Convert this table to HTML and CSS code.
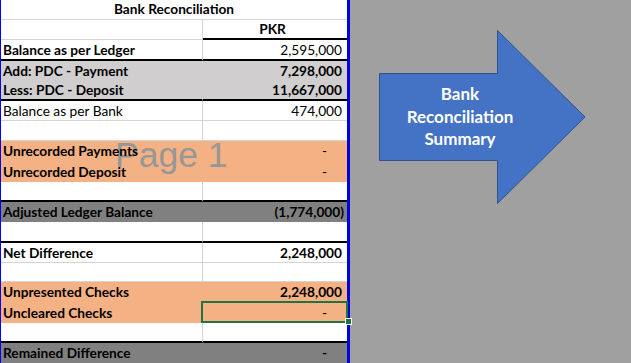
FILE: index.html
```html
<!DOCTYPE html>
<html>
<head>
<meta charset="utf-8">
<link rel="stylesheet" href="styles.css">
</head>
<body>
<div class="page">
  <div class="sheet">
    <div class="watermark">Page 1</div>
    <div class="row h20 title"><div class="c span"><span class="t">Bank Reconciliation</span></div></div>
    <div class="row h20"><div class="c l"></div><div class="c v hdr"><span class="t b ctr">PKR</span></div></div>
    <div class="row h21 thick"><div class="c l"><span class="t b">Balance as per Ledger</span></div><div class="c v"><span class="t">2,595,000</span></div></div>
    <div class="row h20 gray"><div class="c l"><span class="t b">Add: PDC - Payment</span></div><div class="c v"><span class="t b">7,298,000</span></div></div>
    <div class="row h20 gray thick"><div class="c l"><span class="t b">Less: PDC - Deposit</span></div><div class="c v"><span class="t b">11,667,000</span></div></div>
    <div class="row h20"><div class="c l"><span class="t">Balance as per Bank</span></div><div class="c v"><span class="t">474,000</span></div></div>
    <div class="row h20"><div class="c l"></div><div class="c v"></div></div>
    <div class="row h20 orange"><div class="c l"><span class="t b">Unrecorded Payments</span></div><div class="c v"><span class="t dash">-</span></div></div>
    <div class="row h21 orange"><div class="c l"><span class="t b">Unrecorded Deposit</span></div><div class="c v"><span class="t dash">-</span></div></div>
    <div class="row h20 thick"><div class="c l"></div><div class="c v"></div></div>
    <div class="row h20 dark"><div class="c l"><span class="t b">Adjusted Ledger Balance</span></div><div class="c v"><span class="t b neg">(1,774,000)</span></div></div>
    <div class="row h21 thick"><div class="c l"></div><div class="c v"></div></div>
    <div class="row h20"><div class="c l"><span class="t b">Net Difference</span></div><div class="c v"><span class="t b">2,248,000</span></div></div>
    <div class="row h19"><div class="c l"></div><div class="c v"></div></div>
    <div class="row h20 orange"><div class="c l"><span class="t b">Unpresented Checks</span></div><div class="c v"><span class="t b">2,248,000</span></div></div>
    <div class="row h21 orange"><div class="c l"><span class="t b">Uncleared Checks</span></div><div class="c v sel"><span class="t dash">-</span><span class="selbox"></span><span class="handle"></span></div></div>
    <div class="row h20 thick"><div class="c l"></div><div class="c v"></div></div>
    <div class="row h20 dark"><div class="c l"><span class="t b">Remained Difference</span></div><div class="c v"><span class="t b dash">-</span></div></div>
  </div>
  <div class="canvas">
    <svg class="arrow" width="212" height="178" viewBox="0 0 212 178">
      <polygon points="1.5,44.5 119.5,44.5 119.5,1.5 207,88 119.5,174.5 119.5,131.5 1.5,131.5" fill="#4472c4" stroke="#2f528f" stroke-width="1"/>
      <text class="atext" x="82" y="71">Bank</text>
      <text class="atext" x="82" y="93.5">Reconciliation</text>
      <text class="atext" x="82" y="115.5">Summary</text>
    </svg>
  </div>
</div>
</body>
</html>
```

FILE: styles.css
```css
* { box-sizing: border-box; }
html, body { margin: 0; padding: 0; }
body {
  background: #a0a0a0;
  font-family: Lato, "Open Sans", sans-serif;
  color: #000;
  width: 631px;
  height: 363px;
  overflow: hidden;
}
.page {
  display: flex;
  align-items: flex-start;
}
.sheet {
  position: relative;
  width: 350px;
  height: 363px;
  background: #fff;
  border-left: 1px solid #0000ff;
  border-right: 3px solid #0000e0;
  display: flex;
  flex-direction: column;
}
.row {
  display: grid;
  grid-template-columns: 202px 144px;
  flex: none;
}
.h19 { height: 19px; }
.h20 { height: 20px; }
.h21 { height: 21px; }
.c {
  display: flex;
  align-items: flex-end;
  border-bottom: 1px solid #d4d4d4;
  padding-bottom: 1px;
  font-size: 13.7px;
  line-height: 16px;
  white-space: nowrap;
  min-width: 0;
}
.c.l {
  border-right: 1px solid #d4d4d4;
  padding-left: 2px;
}
.c.v {
  justify-content: flex-end;
  padding-right: 5px;
  position: relative;
}
.c.span {
  grid-column: 1 / span 2;
  justify-content: center;
  font-weight: 700;
  padding-bottom: 2px;
}
.c.v.hdr {
  justify-content: center;
  border-bottom: 2px solid #000;
}
.t { position: relative; z-index: 2; }
.b { font-weight: 700; }
.thick .c { border-bottom: 2px solid #000; }
.gray .c { background: #d0cece; border-color: #d0cece; }
.gray.thick .c { border-bottom-color: #000; }
.orange .c { background: #f4b183; border-color: #f4b183; }
.dark .c { background: #808080; border-color: #808080; }
.dash { padding-right: 15px; }
.neg { margin-right: -2px; }
.watermark {
  position: absolute;
  left: 114px;
  top: 138px;
  font-family: "Liberation Sans", Arial, sans-serif;
  font-size: 35.5px;
  line-height: 35px;
  color: #979797;
  z-index: 1;
  white-space: nowrap;
}
.selbox {
  position: absolute;
  left: -2px;
  top: -1px;
  width: 147px;
  height: 22px;
  border: 2px solid #217346;
  z-index: 3;
}
.handle {
  position: absolute;
  left: 142px;
  top: 16px;
  width: 7px;
  height: 7px;
  background: #217346;
  border: 1px solid #fff;
  z-index: 4;
}
.canvas {
  padding: 29px 0 0 28px;
}
.arrow { display: block; }
.atext {
  font-family: Lato, "Open Sans", sans-serif;
  font-weight: 700;
  font-size: 17px;
  fill: #ffffff;
  text-anchor: middle;
}
```
